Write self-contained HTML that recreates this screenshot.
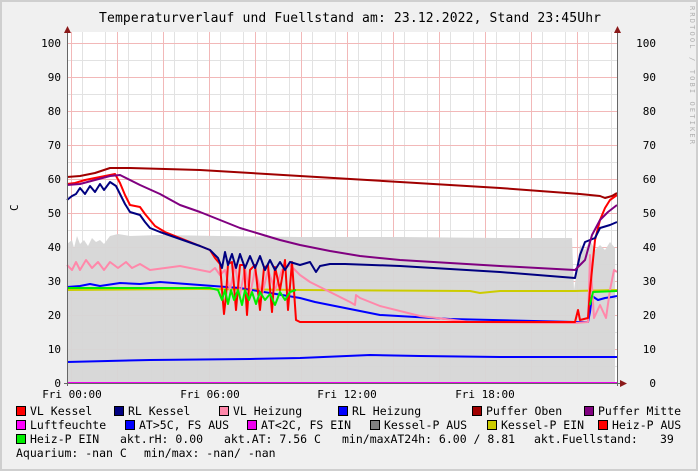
<!DOCTYPE html>
<html><head><meta charset="utf-8"><style>
html,body{margin:0;padding:0;background:#f0f0f0}
svg{display:block}
text{font-family:"DejaVu Sans Mono","Liberation Mono",monospace;fill:#000}
</style></head><body>
<svg width="698" height="471" xmlns="http://www.w3.org/2000/svg">
<rect x="0" y="0" width="698" height="471" fill="#f0f0f0"/>
<rect x="1" y="1" width="696" height="469" fill="none" stroke="#cfcfcf" stroke-width="2"/>
<text x="99" y="22" font-size="13" textLength="502">Temperaturverlauf und Fuellstand am: 23.12.2022, Stand 23:45Uhr</text>
<text transform="translate(690,6) rotate(90)" font-size="7" style="fill:#b0b0b0" textLength="138">RRDTOOL / TOBI OETIKER</text>
<text transform="translate(18,211) rotate(-90)" font-size="11">C</text>
<rect x="67" y="32" width="550" height="351" fill="#fff"/>
<g id="grid">
<g stroke="#e2e2e2" stroke-width="1">
<path d="M67 366.5H617M67 332.5H617M67 298.5H617M67 264.5H617M67 230.5H617M67 196.5H617M67 162.5H617M67 128.5H617M67 94.5H617M67 60.5H617"/>
<path d="M82.5 32V383M105.5 32V383M128.5 32V383M151.5 32V383M174.5 32V383M197.5 32V383M220.5 32V383M243.5 32V383M266.5 32V383M289.5 32V383M312.5 32V383M335.5 32V383M358.5 32V383M381.5 32V383M404.5 32V383M427.5 32V383M450.5 32V383M473.5 32V383M496.5 32V383M519.5 32V383M542.5 32V383M565.5 32V383M588.5 32V383M611.5 32V383"/>
</g>
<g stroke="#f2b8b8" stroke-width="1">
<path d="M67 349.5H617M67 315.5H617M67 281.5H617M67 247.5H617M67 213.5H617M67 179.5H617M67 145.5H617M67 111.5H617M67 77.5H617M67 43.5H617"/>
<path d="M71.5 32V383M117.5 32V383M163.5 32V383M209.5 32V383M255.5 32V383M301.5 32V383M347.5 32V383M393.5 32V383M439.5 32V383M485.5 32V383M531.5 32V383M577.5 32V383"/>
</g>
</g>
<path d="M67 383V244L72 240L74 248L77 236L80 244L84 240L88 246L92 238L96 242L100 240L104 244L110 236L118 234L130 236L160 235L220 236L300 237L400 237L500 238L572 238L574 290L577 270L580 245L585 250L590 240L595 250L600 245L605 250L610 242L615 248L615 383Z" fill="#d6d6d6" opacity="0.95"/>
<g fill="none" stroke-width="2" stroke-linejoin="round">
<path style="stroke:#cccc00" d="M67 290L200 289L300 290L470 291L480 293L500 291L575 291L617 290"/>
<path stroke="#0000ff" d="M67 362L150 360L250 359L300 358L370 355L420 356L500 357L617 357"/>
<path stroke="#0000ff" d="M67 287L80 286L90 284L100 286L120 283L140 284L160 282L200 285L240 288L270 293L300 298L315 302L330 305L380 315L450 319L575 322L588 322L590 312L592 296L598 300L605 298L612 297L617 296"/>
<path style="stroke:#ff88aa" d="M67 265L72 270L76 262L80 270L86 260L92 268L98 262L104 270L110 262L118 268L126 262L132 268L140 264L150 270L180 266L210 272L215 268L220 275L225 270L230 290L235 265L240 295L245 268L250 295L255 270L262 295L268 270L275 290L282 270L290 265L300 275L310 282L330 292L350 302L355 305L356 295L360 298L380 306L420 316L470 322L575 323L588 322L590 255L594 318L600 305L606 318L610 290L614 270L617 272"/>
<path stroke="#ff0000" d="M67 184L75 183L85 180L95 178L105 176L115 174L120 183L125 195L130 205L140 207L145 214L155 226L165 232L195 244L210 250L215 258L220 264L222 290L224 314L226 296L228 264L232 262L236 310L240 265L244 265L247 315L250 270L255 265L260 310L264 268L268 265L272 312L275 267L280 290L285 260L288 310L292 262L296 320L300 322L330 322L345 322L400 322L575 322L578 310L580 320L588 318L590 290L595 240L600 220L605 208L610 200L617 195"/>
<path stroke="#000080" d="M67 200L72 196L76 194L80 188L85 194L90 186L95 192L100 184L104 190L110 182L116 186L120 194L125 204L130 212L140 215L145 222L150 228L160 232L200 246L210 250L218 258L222 268L225 252L228 265L232 254L236 268L240 254L245 268L250 256L255 268L260 256L265 270L270 260L275 270L280 262L285 270L290 262L300 265L310 262L316 272L320 266L330 264L345 264L400 266L500 272L575 278L580 255L585 242L590 240L595 238L600 228L610 225L617 222"/>
<path stroke="#800080" d="M67 185L80 184L95 180L110 176L120 175L140 185L160 194L180 205L200 212L220 220L240 228L260 234L280 240L300 245L330 251L360 256L400 260L450 263L500 266L575 270L585 260L592 235L600 220L608 212L617 205"/>
<path stroke="#a00000" d="M67 177L80 176L95 173L110 168L130 168L200 170L300 176L400 182L500 188L580 194L600 196L605 198L612 196L617 193"/>
<path stroke="#00ee00" d="M67 288L210 288L218 290L222 300L225 290L228 304L231 290L234 300L238 290L242 305L245 290L249 300L252 292L256 304L260 292L265 300L270 294L275 305L280 292L285 300L290 292L296 290"/>
<path stroke="#00ee00" d="M590 305L593 292L617 291"/>
</g>
<path d="M67 383H617" stroke="#ee00ee" stroke-width="2"/>
<path d="M67.5 28V386" stroke="#666" stroke-width="1"/>
<path d="M64 383.5H622" stroke="#666" stroke-width="1"/>
<path d="M617.5 28V386" stroke="#666" stroke-width="1"/>
<path d="M64 33L67.5 26L71 33Z" fill="#8b1a1a"/>
<path d="M614 33L617.5 26L621 33Z" fill="#8b1a1a"/>
<path d="M620 380L627 383.5L620 387Z" fill="#8b1a1a"/>
<g font-size="11" text-anchor="end">
<text x="61" y="47">100</text><text x="61" y="81">90</text><text x="61" y="115">80</text><text x="61" y="149">70</text><text x="61" y="183">60</text><text x="61" y="217">50</text><text x="61" y="251">40</text><text x="61" y="285">30</text><text x="61" y="319">20</text><text x="61" y="353">10</text><text x="61" y="387">0</text>
<text x="656" y="47">100</text><text x="656" y="81">90</text><text x="656" y="115">80</text><text x="656" y="149">70</text><text x="656" y="183">60</text><text x="656" y="217">50</text><text x="656" y="251">40</text><text x="656" y="285">30</text><text x="656" y="319">20</text><text x="656" y="353">10</text><text x="656" y="387">0</text>
</g>
<g font-size="11" text-anchor="middle">
<text x="72" y="398">Fri 00:00</text><text x="210" y="398">Fri 06:00</text><text x="347" y="398">Fri 12:00</text><text x="485" y="398">Fri 18:00</text>
</g>
<g stroke="#000" stroke-width="1">
<rect x="16.5" y="406.5" width="9" height="9" fill="#ff0000"/>
<rect x="114.5" y="406.5" width="9" height="9" fill="#000080"/>
<rect x="219.5" y="406.5" width="9" height="9" fill="#ff88aa"/>
<rect x="338.5" y="406.5" width="9" height="9" fill="#0000ff"/>
<rect x="472.5" y="406.5" width="9" height="9" fill="#a00000"/>
<rect x="584.5" y="406.5" width="9" height="9" fill="#800080"/>
<rect x="16.5" y="420.5" width="9" height="9" fill="#ff00ff"/>
<rect x="125.5" y="420.5" width="9" height="9" fill="#0000ff"/>
<rect x="247.5" y="420.5" width="9" height="9" fill="#ee00ee"/>
<rect x="370.5" y="420.5" width="9" height="9" fill="#808080"/>
<rect x="487.5" y="420.5" width="9" height="9" fill="#cccc00"/>
<rect x="598.5" y="420.5" width="9" height="9" fill="#ff0000"/>
<rect x="16.5" y="434.5" width="9" height="9" fill="#00ee00"/>
</g>
<g font-size="11.5">
<text x="30" y="415">VL Kessel</text><text x="128" y="415">RL Kessel</text><text x="233" y="415">VL Heizung</text><text x="352" y="415">RL Heizung</text><text x="486" y="415">Puffer Oben</text><text x="598" y="415">Puffer Mitte</text>
<text x="30" y="429">Luftfeuchte</text><text x="139" y="429">AT&gt;5C, FS AUS</text><text x="261" y="429">AT&lt;2C, FS EIN</text><text x="384" y="429">Kessel-P AUS</text><text x="501" y="429">Kessel-P EIN</text><text x="612" y="429">Heiz-P AUS</text>
<text x="30" y="443">Heiz-P EIN</text><text x="120" y="443">akt.rH: 0.00</text><text x="224" y="443">akt.AT: 7.56 C</text><text x="342" y="443">min/maxAT24h: 6.00 / 8.81</text><text x="534" y="443">akt.Fuellstand:</text><text x="660" y="443">39</text>
<text x="16" y="457">Aquarium: -nan C</text><text x="144" y="457">min/max: -nan/ -nan</text>
</g>
</svg>
</body></html>
